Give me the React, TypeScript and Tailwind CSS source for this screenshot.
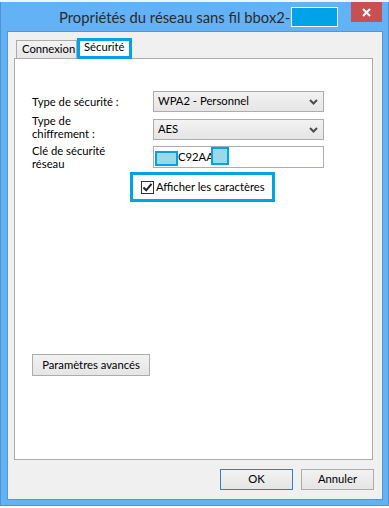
const labelCls = "w-[121px] shrink-0 whitespace-nowrap text-[11.25px] leading-[13px] text-black";

function Chevron() {
  return (
    <svg width="9" height="6" viewBox="0 0 9 6" className="shrink-0">
      <path d="M1 1 L4.5 4.5 L8 1" fill="none" stroke="#4d4d4d" strokeWidth="2" />
    </svg>
  );
}

function Select({ value }: { value: string }) {
  return (
    <div className="flex h-[21px] w-[171px] items-center justify-between whitespace-nowrap border border-[#acacac] bg-gradient-to-b from-[#f2f2f2] to-[#e5e5e5] pl-[4px] pr-[5px] text-[11.25px] text-black">
      <span>{value}</span>
      <Chevron />
    </div>
  );
}

export default function App() {
  return (
    <div className="h-[508px] w-[389px] overflow-hidden bg-white font-['Lato',sans-serif]">
      <div className="h-[2px] bg-[#f3f4f5]" />
      <div className="flex h-[504px] flex-col border-x border-b border-[#4f93d2] bg-[#63b2f6]">
        {/* title bar */}
        <div className="flex h-[29px] shrink-0 items-start">
          <div className="flex items-center whitespace-nowrap pl-[58px] pt-[5px] text-[14.8px] leading-[20px] text-[#2b2b2b]">
            <span>Propriétés du réseau sans fil bbox2-</span>
            <span className="ml-[1px] h-[20px] w-[47px] border border-white bg-[#00a2e8]" />
          </div>
          <button
            type="button"
            className="ml-auto mr-[6px] flex h-[20px] w-[31px] shrink-0 items-center justify-center bg-[#c75050] text-white"
          >
            <svg width="9" height="9" viewBox="0 0 9 9">
              <path d="M1 1 L8 8 M8 1 L1 8" stroke="white" strokeWidth="2" />
            </svg>
          </button>
        </div>

        {/* client area */}
        <div className="ml-[6px] mr-[5px] flex h-[469px] flex-col border border-[#5596d2] bg-[#f0f0f0]">
          {/* tabs */}
          <div className="relative z-10 mt-[6px] flex h-[21px] items-end whitespace-nowrap pl-[8px] text-[11.25px] text-black">
            <div className="mb-[1px] flex h-[18px] w-[61px] items-center border border-b-0 border-[#acacac] bg-gradient-to-b from-[#f3f3f3] to-[#e6e6e6] pl-[5px]">
              Connexion
            </div>
            <div className="flex h-[21px] w-[55px] items-center border-[3px] border-[#00a2e8] bg-white pl-[4px] pb-[2px]">
              Sécurité
            </div>
          </div>

          {/* panel */}
          <div className="-mt-[1px] ml-[6px] flex h-[402px] w-[359px] flex-col border border-[#acacac] bg-white pl-[17px]">
            <div className="mt-[32px] flex h-[21px] items-center">
              <span className={labelCls}>Type de sécurité :</span>
              <Select value="WPA2 - Personnel" />
            </div>
            <div className="mt-[7px] flex h-[21px] items-center">
              <span className={`${labelCls} -mt-[5px] flex flex-col`}>
                <span>Type de</span>
                <span>chiffrement :</span>
              </span>
              <Select value="AES" />
            </div>
            <div className="mt-[6px] flex h-[22px] items-center">
              <span className={`${labelCls} -mt-[1px] flex flex-col`}>
                <span>Clé de sécurité</span>
                <span>réseau</span>
              </span>
              <div className="flex h-[22px] w-[171px] items-center border border-[#abadb3] bg-white pl-[1px] text-[11.25px] text-black">
                <span className="mt-[2px] h-[15px] w-[23px] border-2 border-[#00a2e8] bg-[#99d9ea]" />
                <span>C92AA</span>
                <span className="-ml-[3px] -mt-[2px] h-[18px] w-[18px] border-2 border-[#00a2e8] bg-[#99d9ea]" />
              </div>
            </div>

            <div className="ml-[98px] mt-[4px] flex h-[30px] w-[145px] items-center whitespace-nowrap border-[3px] border-[#00a2e8] pl-[8px] text-[11.25px] text-black">
              <span className="flex h-[13px] w-[13px] shrink-0 items-center justify-center border border-[#333] bg-white">
                <svg width="11" height="11" viewBox="0 0 11 11">
                  <path d="M1.5 5.5 L4.2 8.3 L9.5 1.8" fill="none" stroke="#222" strokeWidth="2" />
                </svg>
              </span>
              <span className="ml-[2px]">Afficher les caractères</span>
            </div>

            <button
              type="button"
              className="mt-[152px] flex h-[22px] w-[118px] items-center justify-center whitespace-nowrap border border-[#acacac] bg-gradient-to-b from-[#f2f2f2] to-[#e5e5e5] text-[11.25px] text-black"
            >
              Paramètres avancés
            </button>
          </div>

          {/* bottom buttons */}
          <div className="mt-[9px] flex justify-end gap-[8px] pr-[8px] text-[11.25px] text-black">
            <button
              type="button"
              className="flex h-[21px] w-[73px] items-center justify-center border border-[#3c7fb1] bg-gradient-to-b from-[#f2f2f2] to-[#e5e5e5]"
            >
              OK
            </button>
            <button
              type="button"
              className="flex h-[21px] w-[73px] items-center justify-center border border-[#acacac] bg-gradient-to-b from-[#f2f2f2] to-[#e5e5e5]"
            >
              Annuler
            </button>
          </div>
        </div>
      </div>
    </div>
  );
}
